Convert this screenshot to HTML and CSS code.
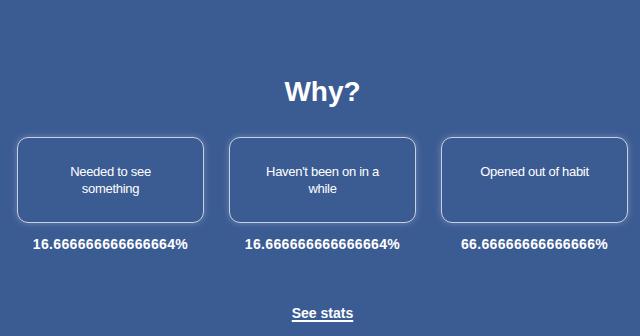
FILE: index.html
```html
<!DOCTYPE html>
<html lang="en">
<head>
<meta charset="utf-8">
<title>Why?</title>
<link rel="stylesheet" href="styles.css">
</head>
<body>
<main class="page">
  <h1 class="title">Why?</h1>
  <div class="options">
    <div class="option">
      <div class="card">Needed to see something</div>
      <div class="pct">16.666666666666664%</div>
    </div>
    <div class="option">
      <div class="card">Haven't been on in a while</div>
      <div class="pct">16.666666666666664%</div>
    </div>
    <div class="option">
      <div class="card">Opened out of habit</div>
      <div class="pct">66.66666666666666%</div>
    </div>
  </div>
  <a class="stats-link" href="#">See stats</a>
</main>
</body>
</html>
```

FILE: styles.css
```css
html, body {
  margin: 0;
  padding: 0;
  background: #3b5b93;
  height: 100%;
}
body {
  font-family: "Liberation Sans", Arial, sans-serif;
  color: #ffffff;
}
.page {
  display: flex;
  flex-direction: column;
  align-items: center;
  padding: 76px 12px 0 17px;
}
.title {
  margin: 0;
  font-size: 28px;
  line-height: 32px;
  font-weight: 700;
  text-align: center;
}
.options {
  margin-top: 29px;
  display: grid;
  grid-template-columns: repeat(3, 187px);
  column-gap: 25px;
}
.option {
  display: flex;
  flex-direction: column;
  align-items: center;
}
.card {
  box-sizing: border-box;
  width: 187px;
  height: 86px;
  padding: 25px 26px 0;
  border: 1px solid rgba(255, 255, 255, 0.72);
  border-radius: 11px;
  box-shadow: 0 0 7px rgba(255, 255, 255, 0.28);
  font-size: 13px;
  line-height: 17px;
  letter-spacing: -0.3px;
  text-align: center;
}
.pct {
  margin-top: 13px;
  font-size: 14px;
  line-height: 16px;
  font-weight: 700;
  letter-spacing: 0.35px;
}
.stats-link {
  margin-top: 53px;
  font-size: 14px;
  line-height: 16px;
  font-weight: 700;
  color: #ffffff;
  text-decoration: underline;
  text-decoration-thickness: 1.5px;
  text-underline-offset: 2px;
}
```
